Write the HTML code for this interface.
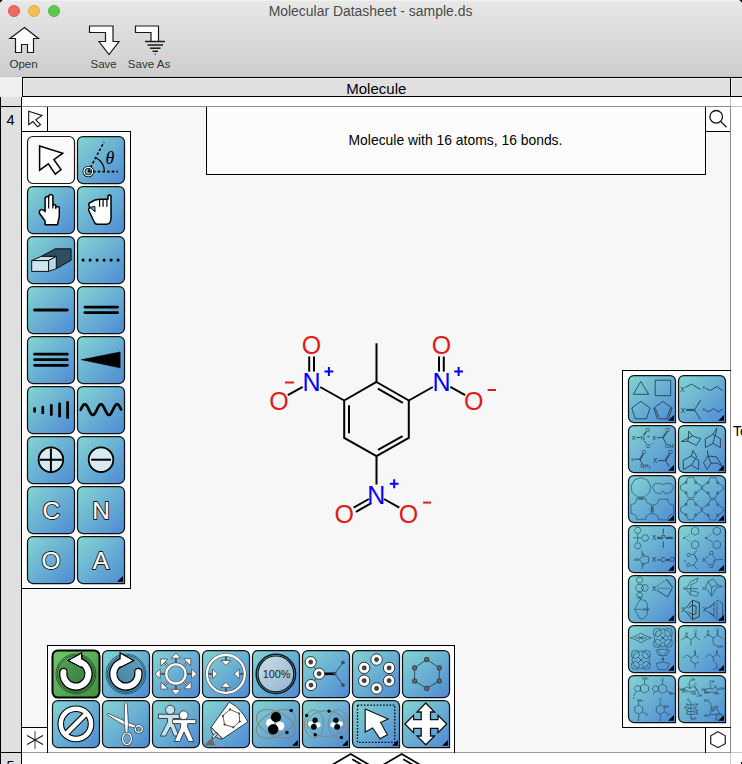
<!DOCTYPE html>
<html><head><meta charset="utf-8"><style>html,body{margin:0;padding:0;width:742px;height:764px;overflow:hidden;background:#fff}svg{display:block}</style></head>
<body><svg width="742" height="764" viewBox="0 0 742 764" font-family="'Liberation Sans', sans-serif"><defs>
<linearGradient id="tb" x1="0" y1="0" x2="0" y2="1"><stop offset="0" stop-color="#e8e8e8"/><stop offset="1" stop-color="#cdcdcd"/></linearGradient>
<linearGradient id="bg" x1="0" y1="0" x2="1" y2="1"><stop offset="0" stop-color="#84d5d2"/><stop offset="1" stop-color="#4e8ad4"/></linearGradient>
<linearGradient id="gg" x1="0" y1="0" x2="1" y2="1"><stop offset="0" stop-color="#73c86c"/><stop offset="1" stop-color="#3f8e3f"/></linearGradient>
</defs>
<rect x="0" y="0" width="742" height="764" fill="#ffffff"/>
<rect x="0" y="0" width="742" height="77" fill="url(#tb)"/>
<rect x="0" y="76" width="743" height="1" fill="#c3c3c3"/>
<rect x="0" y="0" width="743" height="1" fill="#f0f0f0"/>
<path d="M0 0 H3 Q0.8 0.8 0 3 Z" fill="#000"/><path d="M742 0 H739 Q741.2 0.8 742 3 Z" fill="#000"/>
<circle cx="14" cy="11" r="5.6" fill="#ec6a5e" stroke="#d35548" stroke-width="0.8"/>
<circle cx="34" cy="11" r="5.6" fill="#f4bf4f" stroke="#d9a53a" stroke-width="0.8"/>
<circle cx="54" cy="11" r="5.6" fill="#61c554" stroke="#4ea843" stroke-width="0.8"/>
<text x="370.5" y="16" font-size="13.95" fill="#4a4a4a" text-anchor="middle" >Molecular Datasheet - sample.ds</text>
<path d="M24.5 27.5 L38.5 38.5 L33.5 38.5 L33.5 52.5 L27.5 52.5 L27.5 44.5 L21.5 44.5 L21.5 52.5 L15.5 52.5 L15.5 38.5 L10 38.5 Z" fill="#fff" stroke="#1a1a1a" stroke-width="1.2" stroke-linejoin="miter"/>
<text x="23.6" y="67.5" font-size="11.6" fill="#333" text-anchor="middle" >Open</text>
<path d="M89.5 26 L113 26 L113 41.5 L119 41.5 L109 54.5 L99 41.5 L105.5 41.5 L105.5 32.5 L89.5 32.5 Z" fill="#fff" stroke="#1a1a1a" stroke-width="1.2" stroke-linejoin="miter"/>
<text x="103.6" y="67.5" font-size="11.5" fill="#333" text-anchor="middle" >Save</text>
<path d="M135.5 26 L158.5 26 L158.5 41.5 L151 41.5 L151 32.5 L135.5 32.5 Z" fill="#fff" stroke="#1a1a1a" stroke-width="1.2" stroke-linejoin="miter"/>
<line x1="145" y1="41.5" x2="165" y2="41.5" stroke="#1a1a1a" stroke-width="1.5"/>
<line x1="147.5" y1="45" x2="163" y2="45" stroke="#1a1a1a" stroke-width="1.5"/>
<line x1="150" y1="48.2" x2="160.5" y2="48.2" stroke="#1a1a1a" stroke-width="1.5"/>
<line x1="152.5" y1="51.3" x2="158" y2="51.3" stroke="#1a1a1a" stroke-width="1.5"/>
<circle cx="155.3" cy="54.2" r="0.7" fill="#333"/>
<text x="149" y="67.5" font-size="11.6" fill="#333" text-anchor="middle" >Save As</text>
<rect x="0" y="77" width="22" height="20" fill="#efefef"/>
<rect x="22" y="77" width="720" height="20" fill="#000"/>
<rect x="23" y="78" width="707" height="18" fill="#f0f0f0"/>
<rect x="24" y="79" width="706" height="17" fill="#e0e0e0"/>
<rect x="731" y="78" width="11" height="18" fill="#f0f0f0"/>
<rect x="732" y="79" width="10" height="17" fill="#e0e0e0"/>
<text x="376.3" y="93.6" font-size="15.0" fill="#000" text-anchor="middle" >Molecule</text>
<rect x="0" y="97" width="22" height="667" fill="#000"/>
<rect x="1" y="97" width="20" height="667" fill="#e0e0e0"/>
<rect x="1" y="106" width="20" height="1" fill="#000"/>
<rect x="1" y="752" width="20" height="1" fill="#000"/>
<text x="10.5" y="125" font-size="14.5" fill="#000" text-anchor="middle" >4</text>
<text x="10.5" y="771" font-size="14.5" fill="#000" text-anchor="middle" >5</text>
<rect x="22" y="97" width="708" height="656" fill="#ffffff"/>
<rect x="731" y="97" width="11" height="667" fill="#ffffff"/>
<rect x="22" y="106" width="708" height="1" fill="#8c8c8c"/>
<rect x="731" y="106" width="12" height="1" fill="#c4c4c4"/>
<rect x="22" y="752" width="708" height="1" fill="#9a9a9a"/>
<rect x="731" y="752" width="12" height="1" fill="#c8c8c8"/>
<rect x="730" y="97" width="1" height="9" fill="#c4c4c4"/>
<rect x="730" y="106" width="1" height="647" fill="#8c8c8c"/>
<rect x="730" y="753" width="1" height="12" fill="#c8c8c8"/>
<rect x="23" y="107" width="707" height="645" fill="#f7f7f7"/>
<rect x="22" y="107" width="25" height="24" fill="#ffffff"/>
<rect x="47" y="107" width="1" height="25" fill="#000"/>
<rect x="22" y="131" width="26" height="1" fill="#000"/>
<path d="M28.7 111.3 L42 115.4 L35.8 119.8 L40.5 124.6 L37.6 126.8 L33 121.6 L28.7 124.7 Z" fill="#fff" stroke="#111" stroke-width="1.1" stroke-linejoin="miter"/>
<rect x="207" y="107" width="498" height="67" fill="#fcfcfc"/>
<rect x="206" y="107" width="1" height="68" fill="#000"/>
<rect x="705" y="107" width="1" height="68" fill="#000"/>
<rect x="206" y="174" width="500" height="1" fill="#000"/>
<text x="455.5" y="145.2" font-size="13.9" fill="#000" text-anchor="middle" >Molecule with 16 atoms, 16 bonds.</text>
<rect x="706" y="107" width="24" height="24" fill="#ffffff"/>
<rect x="705" y="131" width="25" height="1" fill="#000"/>
<circle cx="716.2" cy="116.8" r="6.3" fill="none" stroke="#111" stroke-width="1.3"/><line x1="720.7" y1="121.4" x2="726.5" y2="127.2" stroke="#111" stroke-width="1.3"/>
<rect x="22" y="132" width="108" height="456" fill="#fcfcfc"/>
<rect x="130" y="131" width="1" height="458" fill="#000"/>
<rect x="22" y="131" width="109" height="1" fill="#000"/>
<rect x="22" y="588" width="109" height="1" fill="#000"/>
<rect x="27.5" y="136.5" width="47" height="47" rx="5.4" fill="#fafafa" stroke="#1a1a1a" stroke-width="1.2"/>
<rect x="77.5" y="136.5" width="47" height="47" rx="5.4" fill="url(#bg)" stroke="#121212" stroke-width="1.25"/>
<rect x="27.5" y="186.5" width="47" height="47" rx="5.4" fill="url(#bg)" stroke="#121212" stroke-width="1.25"/>
<rect x="77.5" y="186.5" width="47" height="47" rx="5.4" fill="url(#bg)" stroke="#121212" stroke-width="1.25"/>
<rect x="27.5" y="236.5" width="47" height="47" rx="5.4" fill="url(#bg)" stroke="#121212" stroke-width="1.25"/>
<rect x="77.5" y="236.5" width="47" height="47" rx="5.4" fill="url(#bg)" stroke="#121212" stroke-width="1.25"/>
<rect x="27.5" y="286.5" width="47" height="47" rx="5.4" fill="url(#bg)" stroke="#121212" stroke-width="1.25"/>
<rect x="77.5" y="286.5" width="47" height="47" rx="5.4" fill="url(#bg)" stroke="#121212" stroke-width="1.25"/>
<rect x="27.5" y="336.5" width="47" height="47" rx="5.4" fill="url(#bg)" stroke="#121212" stroke-width="1.25"/>
<rect x="77.5" y="336.5" width="47" height="47" rx="5.4" fill="url(#bg)" stroke="#121212" stroke-width="1.25"/>
<rect x="27.5" y="386.5" width="47" height="47" rx="5.4" fill="url(#bg)" stroke="#121212" stroke-width="1.25"/>
<rect x="77.5" y="386.5" width="47" height="47" rx="5.4" fill="url(#bg)" stroke="#121212" stroke-width="1.25"/>
<rect x="27.5" y="436.5" width="47" height="47" rx="5.4" fill="url(#bg)" stroke="#121212" stroke-width="1.25"/>
<rect x="77.5" y="436.5" width="47" height="47" rx="5.4" fill="url(#bg)" stroke="#121212" stroke-width="1.25"/>
<rect x="27.5" y="486.5" width="47" height="47" rx="5.4" fill="url(#bg)" stroke="#121212" stroke-width="1.25"/>
<rect x="77.5" y="486.5" width="47" height="47" rx="5.4" fill="url(#bg)" stroke="#121212" stroke-width="1.25"/>
<rect x="27.5" y="536.5" width="47" height="47" rx="5.4" fill="url(#bg)" stroke="#121212" stroke-width="1.25"/>
<path d="M82.9 536.5 H119.1 A5.4 5.4 0 0 1 124.5 541.9 V583.5 H82.9 A5.4 5.4 0 0 1 77.5 578.1 V541.9 A5.4 5.4 0 0 1 82.9 536.5 Z" fill="url(#bg)" stroke="#121212" stroke-width="1.25" stroke-linejoin="miter"/>
<g transform="translate(27,136)"><path d="M12.6 10 L35.8 17.2 L26.9 23.6 L34 33.5 L28.3 38.1 L21.3 27.8 L12.6 34.2 Z" fill="#fff" stroke="#000" stroke-width="1.5" stroke-linejoin="miter"/></g>
<g transform="translate(77,136)"><g stroke="#000" stroke-width="1.6" fill="none">
<line x1="11.3" y1="35.6" x2="41" y2="35.6" stroke-dasharray="2.6 2.1"/>
<line x1="11.3" y1="35.6" x2="27" y2="6" stroke-dasharray="2.6 2.1"/>
<path d="M18.3 21.5 A16 16 0 0 1 27.5 35.6" stroke-width="1.1"/>
</g>
<circle cx="11.3" cy="35.6" r="4.3" fill="none" stroke="#000" stroke-width="2.8"/>
<circle cx="11.3" cy="35.6" r="4.3" fill="none" stroke="#fff" stroke-width="1.3"/>
<text x="33" y="27.5" font-family="'Liberation Serif', serif" font-style="italic" font-size="18" fill="#000" text-anchor="middle">&#952;</text></g>
<g transform="translate(27,186)"><path d="M18.1 38.8 L18.1 35 L12.4 27.2 Q11.8 24.2 14.6 23.4 Q16.6 23.4 18.1 25.6 L18.1 12 Q19.9 9.4 21.7 11 L21.7 9.8 Q23.8 7.2 25.9 9.8 L25.9 19.6 Q27.4 17.6 28.8 19.6 L28.8 21.4 Q30.5 19.4 32.3 21.4 L32.3 30.4 L30.4 38.8 Z" fill="#fff" stroke="#000" stroke-width="1.5" stroke-linejoin="round"/><path d="M21.7 11 V22.6 M25.9 19 V22.6 M28.8 20.8 V23" stroke="#000" stroke-width="1.2"/></g>
<g transform="translate(77,186)"><path d="M11.8 18.6 Q11.5 17.6 12.5 17 L18 14 L22.6 13.2 L31 13.2 L31 9.8 Q32.5 8.4 34 9.8 L34 32.5 Q33.6 38.2 29.5 38.2 L20 38.2 Q18.5 38.2 17.5 36.5 L11.8 24.5 Q11.2 22.6 12.6 21.6 Z" fill="#fff" stroke="#000" stroke-width="1.5" stroke-linejoin="round"/><path d="M22.6 13.4 V20.7 M26.1 13.4 V20.7 M29.9 13.4 V20.7" stroke="#000" stroke-width="1.2"/><polygon points="12.8,21.4 17.8,20.4 18.1,25.8" fill="#63b3d4" stroke="#000" stroke-width="1"/></g>
<g transform="translate(27,236)"><g stroke="#111" stroke-width="1" stroke-linejoin="round">
<polygon points="14.2,20.4 28.3,12.8 44.1,12.8 44.1,24.3 29.3,32.7 29.3,20.4" fill="#2d4f5e"/>
<polygon points="4.7,24.6 14.2,20.4 29.3,20.4 21.6,24.6" fill="#c4e0ec"/>
<rect x="4.7" y="24.6" width="16.9" height="10.8" fill="#cfe5ef"/>
<polygon points="21.6,24.6 29.3,20.4 29.3,32.7 21.6,35.4" fill="#b8d7e6"/>
</g></g>
<g transform="translate(77,236)"><circle cx="6.1" cy="24.1" r="1.55" fill="#000"/><circle cx="13.1" cy="24.1" r="1.55" fill="#000"/><circle cx="20.1" cy="24.1" r="1.55" fill="#000"/><circle cx="27.1" cy="24.1" r="1.55" fill="#000"/><circle cx="34.1" cy="24.1" r="1.55" fill="#000"/><circle cx="41.1" cy="24.1" r="1.55" fill="#000"/></g>
<g transform="translate(27,286)"><line x1="7.6" y1="24" x2="40.2" y2="24" stroke="#000" stroke-width="2.9" stroke-linecap="round"/></g>
<g transform="translate(77,286)"><line x1="7.9" y1="21.1" x2="40.6" y2="21.1" stroke="#000" stroke-width="2.7" stroke-linecap="round"/><line x1="7.9" y1="26.6" x2="40.6" y2="26.6" stroke="#000" stroke-width="2.7" stroke-linecap="round"/></g>
<g transform="translate(27,336)"><line x1="7.6" y1="18.2" x2="40.3" y2="18.2" stroke="#000" stroke-width="2.7" stroke-linecap="round"/><line x1="7.6" y1="23.7" x2="40.3" y2="23.7" stroke="#000" stroke-width="2.7" stroke-linecap="round"/><line x1="7.6" y1="29.3" x2="40.3" y2="29.3" stroke="#000" stroke-width="2.7" stroke-linecap="round"/></g>
<g transform="translate(77,336)"><polygon points="4.3,23.7 43.1,16 43.1,31.8" fill="#000" stroke="#000" stroke-width="0.6"/></g>
<g transform="translate(27,386)"><line x1="7.6" y1="22.5" x2="7.6" y2="25.5" stroke="#000" stroke-width="2.7" stroke-linecap="round"/><line x1="15.8" y1="21.0" x2="15.8" y2="27.0" stroke="#000" stroke-width="2.7" stroke-linecap="round"/><line x1="24.3" y1="19.25" x2="24.3" y2="28.75" stroke="#000" stroke-width="2.7" stroke-linecap="round"/><line x1="32.6" y1="17.75" x2="32.6" y2="30.25" stroke="#000" stroke-width="2.7" stroke-linecap="round"/><line x1="40.6" y1="16.25" x2="40.6" y2="31.75" stroke="#000" stroke-width="2.7" stroke-linecap="round"/></g>
<g transform="translate(77,386)"><polyline points="3.70,23.73 4.10,22.89 4.50,22.07 4.90,21.29 5.30,20.56 5.70,19.90 6.10,19.34 6.50,18.88 6.90,18.53 7.30,18.30 7.70,18.20 8.10,18.24 8.50,18.40 8.90,18.69 9.30,19.09 9.70,19.61 10.10,20.22 10.50,20.92 10.90,21.67 11.30,22.48 11.70,23.31 12.10,24.15 12.50,24.98 12.90,25.77 13.30,26.51 13.70,27.18 14.10,27.76 14.50,28.25 14.90,28.62 15.30,28.87 15.70,28.99 16.10,28.98 16.50,28.84 16.90,28.58 17.30,28.19 17.70,27.70 18.10,27.10 18.50,26.42 18.90,25.67 19.30,24.87 19.70,24.05 20.10,23.21 20.50,22.38 20.90,21.58 21.30,20.82 21.70,20.14 22.10,19.54 22.50,19.04 22.90,18.64 23.30,18.37 23.70,18.23 24.10,18.21 24.50,18.32 24.90,18.56 25.30,18.93 25.70,19.40 26.10,19.98 26.50,20.65 26.90,21.38 27.30,22.17 27.70,23.00 28.10,23.84 28.50,24.67 28.90,25.48 29.30,26.24 29.70,26.94 30.10,27.56 30.50,28.08 30.90,28.49 31.30,28.79 31.70,28.96 32.10,29.00 32.50,28.91 32.90,28.69 33.30,28.35 33.70,27.89 34.10,27.33 34.50,26.68 34.90,25.96 35.30,25.18 35.70,24.36 36.10,23.52 36.50,22.69 36.90,21.87 37.30,21.10 37.70,20.39 38.10,19.75 38.50,19.21 38.90,18.78 39.30,18.46 39.70,18.27 40.10,18.20 40.50,18.27 40.90,18.46 41.30,18.78 41.70,19.21 42.10,19.75 42.50,20.39 42.90,21.10 43.30,21.87 43.70,22.69 44.10,23.52" fill="none" stroke="#000" stroke-width="2.7" stroke-linecap="round" stroke-linejoin="round"/></g>
<g transform="translate(27,436)"><circle cx="23.9" cy="23.7" r="12.3" fill="#d9eaf2" stroke="#000" stroke-width="1.8"/><path d="M12.6 23.7 H35.2 M23.9 12.4 V35" stroke="#000" stroke-width="2"/></g>
<g transform="translate(77,436)"><circle cx="24" cy="23.7" r="12.3" fill="#d9eaf2" stroke="#000" stroke-width="1.8"/><path d="M14.2 23.7 H34" stroke="#000" stroke-width="2"/></g>
<g transform="translate(27,486)"><text x="24.3" y="33.4" font-size="24.4" fill="#111" stroke="#111" stroke-width="1.9" text-anchor="middle" stroke-linejoin="round">C</text><text x="24.3" y="33.4" font-size="24.4" fill="#fff" stroke="#fff" stroke-width="0.15" text-anchor="middle" stroke-linejoin="round">C</text></g>
<g transform="translate(77,486)"><text x="24.0" y="33.4" font-size="24.4" fill="#111" stroke="#111" stroke-width="1.9" text-anchor="middle" stroke-linejoin="round">N</text><text x="24.0" y="33.4" font-size="24.4" fill="#fff" stroke="#fff" stroke-width="0.15" text-anchor="middle" stroke-linejoin="round">N</text></g>
<g transform="translate(27,536)"><text x="24.0" y="33.2" font-size="24.4" fill="#111" stroke="#111" stroke-width="1.9" text-anchor="middle" stroke-linejoin="round">O</text><text x="24.0" y="33.2" font-size="24.4" fill="#fff" stroke="#fff" stroke-width="0.15" text-anchor="middle" stroke-linejoin="round">O</text></g>
<g transform="translate(77,536)"><text x="23.9" y="33.0" font-size="24.4" fill="#111" stroke="#111" stroke-width="1.9" text-anchor="middle" stroke-linejoin="round">A</text><text x="23.9" y="33.0" font-size="24.4" fill="#fff" stroke="#fff" stroke-width="0.15" text-anchor="middle" stroke-linejoin="round">A</text></g>
<path d="M122.9 576 L122.9 581.7 L117.1 581.7 Z" fill="#000"/>
<rect x="623" y="371" width="107" height="356" fill="#ffffff"/>
<rect x="622" y="370" width="1" height="358" fill="#000"/>
<rect x="622" y="370" width="109" height="1" fill="#000"/>
<rect x="622" y="727" width="84" height="1" fill="#000"/>
<path d="M633.9 375.5 H670.1 A5.4 5.4 0 0 1 675.5 380.9 V422.5 H633.9 A5.4 5.4 0 0 1 628.5 417.1 V380.9 A5.4 5.4 0 0 1 633.9 375.5 Z" fill="url(#bg)" stroke="#121212" stroke-width="1.25" stroke-linejoin="miter"/>
<path d="M683.9 375.5 H720.1 A5.4 5.4 0 0 1 725.5 380.9 V422.5 H683.9 A5.4 5.4 0 0 1 678.5 417.1 V380.9 A5.4 5.4 0 0 1 683.9 375.5 Z" fill="url(#bg)" stroke="#121212" stroke-width="1.25" stroke-linejoin="miter"/>
<path d="M633.9 425.5 H670.1 A5.4 5.4 0 0 1 675.5 430.9 V472.5 H633.9 A5.4 5.4 0 0 1 628.5 467.1 V430.9 A5.4 5.4 0 0 1 633.9 425.5 Z" fill="url(#bg)" stroke="#121212" stroke-width="1.25" stroke-linejoin="miter"/>
<path d="M683.9 425.5 H720.1 A5.4 5.4 0 0 1 725.5 430.9 V472.5 H683.9 A5.4 5.4 0 0 1 678.5 467.1 V430.9 A5.4 5.4 0 0 1 683.9 425.5 Z" fill="url(#bg)" stroke="#121212" stroke-width="1.25" stroke-linejoin="miter"/>
<path d="M633.9 475.5 H670.1 A5.4 5.4 0 0 1 675.5 480.9 V522.5 H633.9 A5.4 5.4 0 0 1 628.5 517.1 V480.9 A5.4 5.4 0 0 1 633.9 475.5 Z" fill="url(#bg)" stroke="#121212" stroke-width="1.25" stroke-linejoin="miter"/>
<path d="M683.9 475.5 H720.1 A5.4 5.4 0 0 1 725.5 480.9 V522.5 H683.9 A5.4 5.4 0 0 1 678.5 517.1 V480.9 A5.4 5.4 0 0 1 683.9 475.5 Z" fill="url(#bg)" stroke="#121212" stroke-width="1.25" stroke-linejoin="miter"/>
<path d="M633.9 525.5 H670.1 A5.4 5.4 0 0 1 675.5 530.9 V572.5 H633.9 A5.4 5.4 0 0 1 628.5 567.1 V530.9 A5.4 5.4 0 0 1 633.9 525.5 Z" fill="url(#bg)" stroke="#121212" stroke-width="1.25" stroke-linejoin="miter"/>
<path d="M683.9 525.5 H720.1 A5.4 5.4 0 0 1 725.5 530.9 V572.5 H683.9 A5.4 5.4 0 0 1 678.5 567.1 V530.9 A5.4 5.4 0 0 1 683.9 525.5 Z" fill="url(#bg)" stroke="#121212" stroke-width="1.25" stroke-linejoin="miter"/>
<path d="M633.9 575.5 H670.1 A5.4 5.4 0 0 1 675.5 580.9 V622.5 H633.9 A5.4 5.4 0 0 1 628.5 617.1 V580.9 A5.4 5.4 0 0 1 633.9 575.5 Z" fill="url(#bg)" stroke="#121212" stroke-width="1.25" stroke-linejoin="miter"/>
<path d="M683.9 575.5 H720.1 A5.4 5.4 0 0 1 725.5 580.9 V622.5 H683.9 A5.4 5.4 0 0 1 678.5 617.1 V580.9 A5.4 5.4 0 0 1 683.9 575.5 Z" fill="url(#bg)" stroke="#121212" stroke-width="1.25" stroke-linejoin="miter"/>
<path d="M633.9 625.5 H670.1 A5.4 5.4 0 0 1 675.5 630.9 V672.5 H633.9 A5.4 5.4 0 0 1 628.5 667.1 V630.9 A5.4 5.4 0 0 1 633.9 625.5 Z" fill="url(#bg)" stroke="#121212" stroke-width="1.25" stroke-linejoin="miter"/>
<path d="M683.9 625.5 H720.1 A5.4 5.4 0 0 1 725.5 630.9 V672.5 H683.9 A5.4 5.4 0 0 1 678.5 667.1 V630.9 A5.4 5.4 0 0 1 683.9 625.5 Z" fill="url(#bg)" stroke="#121212" stroke-width="1.25" stroke-linejoin="miter"/>
<path d="M633.9 675.5 H670.1 A5.4 5.4 0 0 1 675.5 680.9 V722.5 H633.9 A5.4 5.4 0 0 1 628.5 717.1 V680.9 A5.4 5.4 0 0 1 633.9 675.5 Z" fill="url(#bg)" stroke="#121212" stroke-width="1.25" stroke-linejoin="miter"/>
<path d="M683.9 675.5 H720.1 A5.4 5.4 0 0 1 725.5 680.9 V722.5 H683.9 A5.4 5.4 0 0 1 678.5 717.1 V680.9 A5.4 5.4 0 0 1 683.9 675.5 Z" fill="url(#bg)" stroke="#121212" stroke-width="1.25" stroke-linejoin="miter"/>
<g transform="translate(628,375)"><polygon points="12.9,6.5 5.2,19.3 20.7,19.3" fill="none" stroke="#1f3440" stroke-width="0.8" stroke-linejoin="round" /><rect x="27.2" y="5.2" width="15.5" height="15.5" fill="none" stroke="#1f3440" stroke-width="0.8" stroke-linejoin="round"/><polygon points="12.9,26.4 22.0,33.0 18.5,43.8 7.3,43.8 3.8,33.0" fill="none" stroke="#1f3440" stroke-width="0.8" stroke-linejoin="round" /><polygon points="34.9,26.4 44.0,33.0 40.5,43.8 29.3,43.8 25.8,33.0" fill="none" stroke="#1f3440" stroke-width="0.8" stroke-linejoin="round" /><polyline points="30.9,42.3 27.2,33.2" fill="none" stroke="#1f3440" stroke-width="0.8" stroke-linejoin="round" /><polyline points="38.9,42.3 42.6,33.2" fill="none" stroke="#1f3440" stroke-width="0.8" stroke-linejoin="round" /></g>
<g transform="translate(678,375)"><text x="4.5" y="17" font-size="6.5" fill="#1f3440" text-anchor="middle">X</text><polyline points="7.4,12.3 13.6,9.1 22.6,14.6" fill="none" stroke="#1f3440" stroke-width="0.8" stroke-linejoin="round" /><text x="25.9" y="14" font-size="4.5" fill="#1f3440" text-anchor="middle">x</text><polyline points="27.8,13.3 32.3,15.5 38.8,11.6 44.6,15.5" fill="none" stroke="#1f3440" stroke-width="0.8" stroke-linejoin="round" /><text x="5.2" y="38" font-size="7" fill="#1f3440" text-anchor="middle">X</text><polyline points="8.1,34.3 16.5,34.3" fill="none" stroke="#1f3440" stroke-width="0.8" stroke-linejoin="round" /><polyline points="8.1,35.5 16.5,35.5" fill="none" stroke="#1f3440" stroke-width="0.8" stroke-linejoin="round" /><polyline points="22.6,25.2 16.5,34.9 22.6,44.6" fill="none" stroke="#1f3440" stroke-width="0.8" stroke-linejoin="round" /><text x="25.5" y="36" font-size="4.5" fill="#1f3440" text-anchor="middle">x</text><polyline points="27.2,34.9 30.4,36.9 35.6,33.6 40.4,36.9 44.6,34.0" fill="none" stroke="#1f3440" stroke-width="0.8" stroke-linejoin="round" /></g>
<g transform="translate(628,425)"><text x="5.8" y="14.6" font-size="5.8" fill="#1f3440" text-anchor="middle">X</text><polyline points="8.4,12.6 12.6,12.6" fill="none" stroke="#1f3440" stroke-width="0.8" stroke-linejoin="round" /><text x="14.9" y="14.9" font-size="5.8" fill="#1f3440" text-anchor="middle">N</text><text x="20.4" y="13.2" font-size="4.5" fill="#1f3440" text-anchor="middle">+</text><text x="19.7" y="6.9" font-size="5.8" fill="#1f3440" text-anchor="middle">O</text><polyline points="15.1,10.1 17.7,6.9" fill="none" stroke="#1f3440" stroke-width="0.8" stroke-linejoin="round" /><polyline points="15.9,10.5 18.5,7.3" fill="none" stroke="#1f3440" stroke-width="0.8" stroke-linejoin="round" /><text x="20" y="22.7" font-size="5.8" fill="#1f3440" text-anchor="middle">O</text><polyline points="15.8,15.5 18.4,18.4" fill="none" stroke="#1f3440" stroke-width="0.8" stroke-linejoin="round" /><text x="24.9" y="20" font-size="4.5" fill="#1f3440" text-anchor="middle">&#8722;</text><text x="26.2" y="14.9" font-size="5.8" fill="#1f3440" text-anchor="middle">X</text><polyline points="28.8,12.6 34.9,12.6" fill="none" stroke="#1f3440" stroke-width="0.8" stroke-linejoin="round" /><polyline points="34.5,12.3 38.4,6.8" fill="none" stroke="#1f3440" stroke-width="0.8" stroke-linejoin="round" /><polyline points="35.3,12.9 39.2,7.4" fill="none" stroke="#1f3440" stroke-width="0.8" stroke-linejoin="round" /><text x="39.5" y="7.2" font-size="5.8" fill="#1f3440" text-anchor="middle">O</text><polyline points="34.9,12.6 38.2,18.8" fill="none" stroke="#1f3440" stroke-width="0.8" stroke-linejoin="round" /><text x="41.4" y="22.7" font-size="5.8" fill="#1f3440" text-anchor="middle">OH</text><text x="4.5" y="35.6" font-size="5" fill="#1f3440" text-anchor="middle">x</text><polyline points="6.5,34.3 12.0,34.3" fill="none" stroke="#1f3440" stroke-width="0.8" stroke-linejoin="round" /><polyline points="11.6,34.0 14.8,28.8" fill="none" stroke="#1f3440" stroke-width="0.8" stroke-linejoin="round" /><polyline points="12.4,34.6 15.6,29.4" fill="none" stroke="#1f3440" stroke-width="0.8" stroke-linejoin="round" /><text x="15.8" y="29.2" font-size="5.5" fill="#1f3440" text-anchor="middle">O</text><polyline points="12.0,34.3 14.6,39.5" fill="none" stroke="#1f3440" stroke-width="0.8" stroke-linejoin="round" /><text x="17.5" y="43.4" font-size="5.5" fill="#1f3440" text-anchor="middle">NH&#8322;</text><text x="27.2" y="37.8" font-size="6.5" fill="#1f3440" text-anchor="middle">X</text><polyline points="30.1,35.6 37.5,35.6" fill="none" stroke="#1f3440" stroke-width="0.8" stroke-linejoin="round" /><polyline points="37.1,35.3 41.0,28.8" fill="none" stroke="#1f3440" stroke-width="0.8" stroke-linejoin="round" /><polyline points="37.9,35.9 41.8,29.4" fill="none" stroke="#1f3440" stroke-width="0.8" stroke-linejoin="round" /><text x="42.4" y="28.8" font-size="6" fill="#1f3440" text-anchor="middle">O</text><polyline points="37.5,35.6 41.4,42.0" fill="none" stroke="#1f3440" stroke-width="0.8" stroke-linejoin="round" /></g>
<g transform="translate(678,425)"><path d="M10.7 6.1 L14.6 11.0 M10.7 6.1 L10.3 13.6 M14.6 11.0 L22.6 13.6 M22.6 13.6 L18.4 20.4 M18.4 20.4 L9.7 16.2 M9.7 16.2 L3.2 16.5 M3.2 16.5 L14.6 11.0 M10.3 13.6 L9.7 16.2" fill="none" stroke="#1f3440" stroke-width="0.8" stroke-linejoin="round" /><path d="M38.8 3.2 L34.9 9.4 M38.8 3.2 L37.5 10.3 M34.9 9.4 L27.2 13.9 M27.2 13.9 L27.5 22.6 M27.5 22.6 L34.9 18.4 M34.9 18.4 L42.4 22.6 M42.4 22.6 L42.4 13.6 M42.4 13.6 L34.9 9.4 M34.9 18.4 L36.9 10.3" fill="none" stroke="#1f3440" stroke-width="0.8" stroke-linejoin="round" /><path d="M14.9 25.5 L13.3 31.0 M14.9 25.5 L18.8 31.7 M13.3 31.0 L5.2 35.3 M5.2 35.3 L5.5 44.6 M5.5 44.6 L13.3 40.1 M13.3 40.1 L20.7 44.6 M20.7 44.6 L20.7 35.3 M20.7 35.3 L13.3 31.0 M13.3 40.1 L18.8 31.7" fill="none" stroke="#1f3440" stroke-width="0.8" stroke-linejoin="round" /><path d="M29.4 25.2 L30.1 31.0 M30.1 31.0 L25.5 37.8 M25.5 37.8 L29.1 44.6 M29.1 44.6 L33.0 38.2 M33.0 38.2 L30.1 31.0 M30.1 31.0 L38.8 32.0 M38.8 32.0 L44.0 41.4 M33.0 38.2 L39.5 38.2 M39.5 38.2 L44.0 41.4" fill="none" stroke="#1f3440" stroke-width="0.8" stroke-linejoin="round" /></g>
<g transform="translate(628,475)"><polygon points="12.9,2.6 19.3,4.9 22.7,10.9 21.6,17.6 16.3,22.0 9.5,22.0 4.2,17.6 3.1,10.9 6.5,4.9" fill="none" stroke="#2c5468" stroke-width="0.9" stroke-opacity="0.8" stroke-linejoin="round"/><polygon points="24.3,12.3 27.2,8.4 32.3,8.4 35,10 37.5,8.4 42.7,8.4 45.6,12.3 42.7,17.5 37.5,18.8 35,15.8 32.3,18.8 27.2,17.5" fill="none" stroke="#2c5468" stroke-width="0.9" stroke-opacity="0.8" stroke-linejoin="round"/><path d="M8.700000000000001 23.7 H17.9 Q17.9 29.4 23.6 29.4 V38.6 Q17.9 38.6 17.9 44.3 H8.700000000000001 Q8.700000000000001 38.6 3.0 38.6 V29.4 Q8.700000000000001 29.4 8.700000000000001 23.7 Z" fill="none" stroke="#2c5468" stroke-width="0.9" stroke-opacity="0.8" stroke-linejoin="round"/><path d="M30.699999999999996 24.3 H39.9 Q39.9 30.0 45.599999999999994 30.0 V39.2 Q39.9 39.2 39.9 44.900000000000006 H30.699999999999996 Q30.699999999999996 39.2 24.999999999999996 39.2 V30.0 Q30.699999999999996 30.0 30.699999999999996 24.3 Z" fill="none" stroke="#2c5468" stroke-width="0.9" stroke-opacity="0.8" stroke-linejoin="round"/><path d="M10.5 23 H15.5 M10.5 24.2 H15.5 M23.4 32 V37 M24.6 32 V37" fill="none" stroke="#2c5468" stroke-width="0.9" stroke-opacity="0.8" stroke-linejoin="round"/></g>
<g transform="translate(678,475)"><polygon points="10.3,2.4 15.5,2.4 17.7,7.4 23.3,10.8 23.3,14.4 17.7,17.8 15.5,22.8 10.3,22.8 8.1,17.8 2.5,14.4 2.5,10.8 8.1,7.4" fill="none" stroke="#2c5468" stroke-width="0.9" stroke-opacity="0.8" stroke-linejoin="round"/><circle cx="8.1" cy="7.4" r="1.1" fill="none" stroke="#2c5468" stroke-width="0.9" stroke-opacity="0.8" stroke-linejoin="round"/><circle cx="17.7" cy="7.4" r="1.1" fill="none" stroke="#2c5468" stroke-width="0.9" stroke-opacity="0.8" stroke-linejoin="round"/><circle cx="8.1" cy="17.8" r="1.1" fill="none" stroke="#2c5468" stroke-width="0.9" stroke-opacity="0.8" stroke-linejoin="round"/><circle cx="17.7" cy="17.8" r="1.1" fill="none" stroke="#2c5468" stroke-width="0.9" stroke-opacity="0.8" stroke-linejoin="round"/><polygon points="32.3,2.7 37.5,2.7 39.7,7.7 45.3,11.1 45.3,14.7 39.7,18.1 37.5,23.1 32.3,23.1 30.1,18.1 24.5,14.7 24.5,11.1 30.1,7.7" fill="none" stroke="#2c5468" stroke-width="0.9" stroke-opacity="0.8" stroke-linejoin="round"/><circle cx="30.1" cy="7.7" r="1.1" fill="none" stroke="#2c5468" stroke-width="0.9" stroke-opacity="0.8" stroke-linejoin="round"/><circle cx="39.7" cy="7.7" r="1.1" fill="none" stroke="#2c5468" stroke-width="0.9" stroke-opacity="0.8" stroke-linejoin="round"/><circle cx="30.1" cy="18.1" r="1.1" fill="none" stroke="#2c5468" stroke-width="0.9" stroke-opacity="0.8" stroke-linejoin="round"/><circle cx="39.7" cy="18.1" r="1.1" fill="none" stroke="#2c5468" stroke-width="0.9" stroke-opacity="0.8" stroke-linejoin="round"/><polygon points="10.3,24.4 15.5,24.4 17.7,29.4 23.3,32.8 23.3,36.4 17.7,39.8 15.5,44.8 10.3,44.8 8.1,39.8 2.5,36.4 2.5,32.8 8.1,29.4" fill="none" stroke="#2c5468" stroke-width="0.9" stroke-opacity="0.8" stroke-linejoin="round"/><circle cx="8.1" cy="29.4" r="1.1" fill="none" stroke="#2c5468" stroke-width="0.9" stroke-opacity="0.8" stroke-linejoin="round"/><circle cx="17.7" cy="29.4" r="1.1" fill="none" stroke="#2c5468" stroke-width="0.9" stroke-opacity="0.8" stroke-linejoin="round"/><circle cx="8.1" cy="39.8" r="1.1" fill="none" stroke="#2c5468" stroke-width="0.9" stroke-opacity="0.8" stroke-linejoin="round"/><circle cx="17.7" cy="39.8" r="1.1" fill="none" stroke="#2c5468" stroke-width="0.9" stroke-opacity="0.8" stroke-linejoin="round"/><polygon points="32.3,24.7 37.5,24.7 39.7,29.7 45.3,33.1 45.3,36.7 39.7,40.1 37.5,45.1 32.3,45.1 30.1,40.1 24.5,36.7 24.5,33.1 30.1,29.7" fill="none" stroke="#2c5468" stroke-width="0.9" stroke-opacity="0.8" stroke-linejoin="round"/><circle cx="30.1" cy="29.7" r="1.1" fill="none" stroke="#2c5468" stroke-width="0.9" stroke-opacity="0.8" stroke-linejoin="round"/><circle cx="39.7" cy="29.7" r="1.1" fill="none" stroke="#2c5468" stroke-width="0.9" stroke-opacity="0.8" stroke-linejoin="round"/><circle cx="30.1" cy="40.1" r="1.1" fill="none" stroke="#2c5468" stroke-width="0.9" stroke-opacity="0.8" stroke-linejoin="round"/><circle cx="39.7" cy="40.1" r="1.1" fill="none" stroke="#2c5468" stroke-width="0.9" stroke-opacity="0.8" stroke-linejoin="round"/></g>
<g transform="translate(628,525)"><polygon points="13.1,5.3 11.4,8.2 8.0,8.2 6.3,5.3 8.0,2.4 11.4,2.4" fill="none" stroke="#2c5468" stroke-width="0.9" stroke-opacity="0.8" stroke-linejoin="round"/><polygon points="20.8,12.9 19.0,16.0 15.4,16.0 13.6,12.9 15.4,9.8 19.0,9.8" fill="none" stroke="#2c5468" stroke-width="0.9" stroke-opacity="0.8" stroke-linejoin="round"/><polygon points="13.1,20.8 11.4,23.7 8.0,23.7 6.3,20.8 8.0,17.9 11.4,17.9" fill="none" stroke="#2c5468" stroke-width="0.9" stroke-opacity="0.8" stroke-linejoin="round"/><path d="M5.5 12.9 H13.6 M9.7 8.7 V17" fill="none" stroke="#2c5468" stroke-width="0.9" stroke-opacity="0.8" stroke-linejoin="round"/><text x="26.2" y="15.2" font-size="6.5" fill="#1f3440" text-anchor="middle">X</text><polyline points="29.1,12.3 33.4,12.3" fill="none" stroke="#1f3440" stroke-width="0.8" stroke-linejoin="round" /><polyline points="29.1,13.5 33.4,13.5" fill="none" stroke="#1f3440" stroke-width="0.8" stroke-linejoin="round" /><text x="35.3" y="15.2" font-size="6.5" fill="#1f3440" text-anchor="middle">P</text><polyline points="35.3,3.6 35.3,9.2" fill="none" stroke="#1f3440" stroke-width="0.8" stroke-linejoin="round" /><polyline points="35.3,16.6 35.3,22.6" fill="none" stroke="#1f3440" stroke-width="0.8" stroke-linejoin="round" /><polyline points="37.8,12.3 44.8,12.3" fill="none" stroke="#1f3440" stroke-width="0.8" stroke-linejoin="round" /><polyline points="37.8,13.5 44.8,13.5" fill="none" stroke="#1f3440" stroke-width="0.8" stroke-linejoin="round" /><path d="M11.3 34.6 L14.9 30.8 L20.7 31.8 V37.4 L14.9 38.8 Z M6.1 34 H11.3 M6.1 35.2 H11.3 M14.6 29 L13.6 25.5 M14.6 40.3 L13.6 44.6" fill="none" stroke="#2c5468" stroke-width="0.9" stroke-opacity="0.8" stroke-linejoin="round"/><text x="14.9" y="31" font-size="3.8" fill="#1f3440" text-anchor="middle">N</text><text x="14.9" y="41" font-size="3.8" fill="#1f3440" text-anchor="middle">N</text><text x="26.2" y="37.2" font-size="6.5" fill="#1f3440" text-anchor="middle">X</text><polyline points="29.1,35.0 32.4,35.0" fill="none" stroke="#1f3440" stroke-width="0.8" stroke-linejoin="round" /><text x="34.9" y="37.2" font-size="6.5" fill="#1f3440" text-anchor="middle">C</text><polyline points="37.5,34.4 41.5,34.4" fill="none" stroke="#1f3440" stroke-width="0.8" stroke-linejoin="round" /><polyline points="37.5,35.6 41.5,35.6" fill="none" stroke="#1f3440" stroke-width="0.8" stroke-linejoin="round" /><text x="44" y="37.2" font-size="6.5" fill="#1f3440" text-anchor="middle">O</text></g>
<g transform="translate(678,525)"><polygon points="20.7,8.2 17.1,10.3 13.5,8.2 13.5,4.0 17.1,1.9 20.7,4.0" fill="none" stroke="#2c5468" stroke-width="0.9" stroke-opacity="0.8" stroke-linejoin="round"/><polygon points="20.7,21.8 17.1,23.9 13.5,21.8 13.5,17.6 17.1,15.5 20.7,17.6" fill="none" stroke="#2c5468" stroke-width="0.9" stroke-opacity="0.8" stroke-linejoin="round"/><path d="M6.1 12.9 L12.9 8.7 M6.1 12.9 L12.9 17.1" fill="none" stroke="#2c5468" stroke-width="0.9" stroke-opacity="0.8" stroke-linejoin="round" stroke-dasharray="1 1"/><circle cx="6.1" cy="12.9" r="0.8" fill="#2c5468"/><polygon points="42.4,8.2 38.8,10.3 35.2,8.2 35.2,4.0 38.8,1.9 42.4,4.0" fill="none" stroke="#2c5468" stroke-width="0.9" stroke-opacity="0.8" stroke-linejoin="round"/><polygon points="42.4,21.8 38.8,23.9 35.2,21.8 35.2,17.6 38.8,15.5 42.4,17.6" fill="none" stroke="#2c5468" stroke-width="0.9" stroke-opacity="0.8" stroke-linejoin="round"/><path d="M27.8 12.9 L34.6 8.7" fill="none" stroke="#2c5468" stroke-width="0.9" stroke-opacity="0.8" stroke-linejoin="round" stroke-dasharray="1 1"/><path d="M27.8 12.9 L34.6 17.1" fill="none" stroke="#2c5468" stroke-width="0.9" stroke-opacity="0.8" stroke-linejoin="round"/><circle cx="27.8" cy="12.9" r="0.8" fill="#2c5468"/><text x="10.7" y="31.6" font-size="5" fill="#1f3440" text-anchor="middle">O</text><text x="10.3" y="41.9" font-size="5" fill="#1f3440" text-anchor="middle">O</text><text x="7.1" y="36.5" font-size="4" fill="#1f3440" text-anchor="middle">x</text><path d="M12.6 29.6 L15.9 29.4 L18.8 25.2 M15.9 29.4 L19.1 34.9 L15.9 40.1 L19.1 44.6 M12.6 40.3 L15.9 40.1 M16.4 29.9 L19.6 34.9" fill="none" stroke="#2c5468" stroke-width="0.9" stroke-opacity="0.8" stroke-linejoin="round"/><text x="25.9" y="37" font-size="6" fill="#1f3440" text-anchor="middle">X</text><text x="33.3" y="30" font-size="5.5" fill="#1f3440" text-anchor="middle">O</text><text x="33.3" y="43.3" font-size="5.5" fill="#1f3440" text-anchor="middle">O</text><path d="M27.8 33.2 L31.6 29.6 M27.8 36.6 L31.6 40.1 M34.8 29.6 L37.5 34.9 L34.8 40.1 M36.4 34.9 L35.2 37.4 M37.5 34.9 L45 34.3" fill="none" stroke="#2c5468" stroke-width="0.9" stroke-opacity="0.8" stroke-linejoin="round"/></g>
<g transform="translate(628,575)"><polygon points="15.0,4.9 13.3,7.8 9.9,7.8 8.2,4.9 9.9,2.0 13.3,2.0" fill="none" stroke="#2c5468" stroke-width="0.9" stroke-opacity="0.8" stroke-linejoin="round"/><polygon points="15.8,12.9 13.7,16.5 9.5,16.5 7.4,12.9 9.5,9.3 13.7,9.3" fill="none" stroke="#2c5468" stroke-width="0.9" stroke-opacity="0.8" stroke-linejoin="round"/><polygon points="20.4,12.9 18.6,16.0 15.0,16.0 13.2,12.9 15.0,9.8 18.6,9.8" fill="none" stroke="#2c5468" stroke-width="0.9" stroke-opacity="0.8" stroke-linejoin="round"/><polygon points="14.8,20.4 13.2,23.2 10.0,23.2 8.4,20.4 10.0,17.6 13.2,17.6" fill="none" stroke="#2c5468" stroke-width="0.9" stroke-opacity="0.8" stroke-linejoin="round"/><path d="M12 24.6 L17.5 25.5 L19.4 29.8 V38.8 L16.2 43.3 L12 44 L6.5 34.3 Z M6.5 34.3 H16.5" fill="none" stroke="#2c5468" stroke-width="0.9" stroke-opacity="0.8" stroke-linejoin="round"/><text x="12" y="24.4" font-size="4" fill="#1f3440" text-anchor="middle">N</text><text x="18.4" y="36" font-size="4" fill="#1f3440" text-anchor="middle">NH</text><text x="26.2" y="15.5" font-size="7" fill="#1f3440" text-anchor="middle">X</text><path d="M28.5 11.5 L38.8 4.5 M29.5 13.3 H42" fill="none" stroke="#1f3440" stroke-width="0.8" stroke-linejoin="round" stroke-dasharray="1 1"/><path d="M28.5 15 L39.5 22 L44.6 12.3" fill="none" stroke="#1f3440" stroke-width="0.8" stroke-linejoin="round"/><path d="M38.8 4.5 L44.6 12.3" fill="none" stroke="#1f3440" stroke-width="1.6" stroke-dasharray="0.6 0.6"/></g>
<g transform="translate(678,575)"><text x="6.1" y="15.2" font-size="4.5" fill="#1f3440" text-anchor="middle">x</text><path d="M7.6 13.6 L12.9 6.5 L20 3 L18.8 7.1 L12.9 9.7 L12.5 20 L18.8 21.3 L20.7 17.5 L12.5 15.5 M7.6 13.6 L12.5 20 M7.6 13.6 L20 13.6" fill="none" stroke="#2c5468" stroke-width="0.9" stroke-opacity="0.8" stroke-linejoin="round"/><text x="25.5" y="15.2" font-size="4.5" fill="#1f3440" text-anchor="middle">x</text><path d="M27 13.6 L30 6.5 L35.3 3.9 L39.5 9.7 L44.6 11.6 L38.8 12.3 L33.6 21.3 L30 15.5 Z M30 6.5 L33.6 12.3 L39.5 9.7 M33.6 12.3 V21.3" fill="none" stroke="#2c5468" stroke-width="0.9" stroke-opacity="0.8" stroke-linejoin="round"/><text x="5.5" y="37.2" font-size="6.5" fill="#1f3440" text-anchor="middle">X</text><path d="M7.5 33.6 L14.5 25.2 L21.3 27.8 V41.4 L14.5 44.6 L7.5 36 M10.5 33 L14.5 30 L18 31 V38.5 L14.5 40 L10.5 37 M14.5 25.2 V44.6" fill="none" stroke="#1f3440" stroke-width="0.9" stroke-linejoin="round"/><text x="26.8" y="37.2" font-size="6.5" fill="#1f3440" text-anchor="middle">X</text><path d="M29 33.6 L40 25.2 L44.6 28.5 V42 L40 44.6 L29 36 M31.5 33 L36 28.5 V41 L31.5 37 M39 28 V42" fill="none" stroke="#1f3440" stroke-width="0.9" stroke-linejoin="round" stroke-dasharray="1.2 0.6"/></g>
<g transform="translate(628,625)"><path d="M2.6 12.9 L7 11.2 L10.5 9.5 L12.9 8.1 L15.3 9.5 L18.8 11.2 L23.3 12.9 L18.8 14.6 L15.3 16.3 L12.9 17.8 L10.5 16.3 L7 14.6 Z M7 12.9 H18.8 M10.5 11 L15.3 14.8 M15.3 11 L10.5 14.8" fill="none" stroke="#2c5468" stroke-width="0.9" stroke-opacity="0.8" stroke-linejoin="round"/><polygon points="43.6,21.6 38.3,22.4 35.9,17.7 39.7,13.9 44.4,16.3" fill="none" stroke="#2c5468" stroke-width="0.9" stroke-opacity="0.8" stroke-linejoin="round"/><polygon points="26.2,21.6 25.4,16.3 30.1,13.9 33.9,17.7 31.5,22.4" fill="none" stroke="#2c5468" stroke-width="0.9" stroke-opacity="0.8" stroke-linejoin="round"/><polygon points="26.2,4.2 31.5,3.4 33.9,8.1 30.1,11.9 25.4,9.5" fill="none" stroke="#2c5468" stroke-width="0.9" stroke-opacity="0.8" stroke-linejoin="round"/><polygon points="43.6,4.2 44.4,9.5 39.7,11.9 35.9,8.1 38.3,3.4" fill="none" stroke="#2c5468" stroke-width="0.9" stroke-opacity="0.8" stroke-linejoin="round"/><polygon points="43.9,12.9 41.3,19.3 34.9,21.9 28.5,19.3 25.9,12.9 28.5,6.5 34.9,3.9 41.3,6.5" fill="none" stroke="#2c5468" stroke-width="0.9" stroke-opacity="0.8" stroke-linejoin="round"/><path d="M31.9 9.9 L37.9 15.9 M37.9 9.9 L31.9 15.9" fill="none" stroke="#2c5468" stroke-width="0.9" stroke-opacity="0.8" stroke-linejoin="round"/><circle cx="34.9" cy="12.9" r="0.8" fill="#2c5468"/><polygon points="21.6,43.6 16.3,44.4 13.9,39.7 17.7,35.9 22.4,38.3" fill="none" stroke="#2c5468" stroke-width="0.9" stroke-opacity="0.8" stroke-linejoin="round"/><polygon points="4.2,43.6 3.4,38.3 8.1,35.9 11.9,39.7 9.5,44.4" fill="none" stroke="#2c5468" stroke-width="0.9" stroke-opacity="0.8" stroke-linejoin="round"/><polygon points="4.2,26.2 9.5,25.4 11.9,30.1 8.1,33.9 3.4,31.5" fill="none" stroke="#2c5468" stroke-width="0.9" stroke-opacity="0.8" stroke-linejoin="round"/><polygon points="21.6,26.2 22.4,31.5 17.7,33.9 13.9,30.1 16.3,25.4" fill="none" stroke="#2c5468" stroke-width="0.9" stroke-opacity="0.8" stroke-linejoin="round"/><polygon points="21.9,34.9 19.3,41.3 12.9,43.9 6.5,41.3 3.9,34.9 6.5,28.5 12.9,25.9 19.3,28.5" fill="none" stroke="#2c5468" stroke-width="0.9" stroke-opacity="0.8" stroke-linejoin="round"/><path d="M9.9 31.9 L15.9 37.9 M15.9 31.9 L9.9 37.9" fill="none" stroke="#2c5468" stroke-width="0.9" stroke-opacity="0.8" stroke-linejoin="round"/><circle cx="12.9" cy="34.9" r="0.8" fill="#2c5468"/><path d="M28.1 25.5 L30 24.3 H39.5 L41.4 25.5 L39 30.4 H30.5 Z M30 24.3 L33 30.4 M39.5 24.3 L36.5 30.4 M28.1 38.5 L34.9 37 L41.4 38.5 L39 44.6 H30.5 Z M34.9 30.4 V37 M33.6 33.5 H36.2 M33.6 34.6 H36.2" fill="none" stroke="#2c5468" stroke-width="0.9" stroke-opacity="0.8" stroke-linejoin="round"/></g>
<g transform="translate(678,625)"><path d="M3.6 14.9 L8.4 11.6 L12.9 14.6 L17.5 11.9 L22 14.9 M12.9 14.6 V20.7 M17.1 11.9 V7.5 M17.9 11.9 V7.5 M25.9 13.3 L30 9.7 L35 12.9 L39.5 10.3 L44.6 13.3 M35 12.9 V18.8 L39.5 21.3 M39.1 10.3 V5.8 M39.9 10.3 V5.8" fill="none" stroke="#2c5468" stroke-width="0.9" stroke-opacity="0.8" stroke-linejoin="round"/><text x="8.4" y="9.6" font-size="3.5" fill="#1f3440" text-anchor="middle">H</text><text x="8.4" y="13.2" font-size="3.5" fill="#1f3440" text-anchor="middle">N</text><text x="17.5" y="7.2" font-size="3.8" fill="#1f3440" text-anchor="middle">O</text><text x="30" y="7.8" font-size="3.5" fill="#1f3440" text-anchor="middle">H</text><text x="30" y="11.4" font-size="3.5" fill="#1f3440" text-anchor="middle">N</text><text x="39.5" y="5.6" font-size="3.8" fill="#1f3440" text-anchor="middle">O</text><text x="42" y="23" font-size="3.8" fill="#1f3440" text-anchor="middle">SH</text><path d="M4.9 33 L9.1 30 L12.9 32.7 L17.1 29.8 L21 33 M12.9 32.7 V36.2 L17.1 38.8 L21 36.8 M17.1 38.8 V43.5 M16.7 29.8 V25.5 M17.5 29.8 V25.5 M27.5 32 L31.4 29.4 L35.3 32 L38.8 29.4 L42.4 32 M35.3 32 V36.2 L38.8 38.8 V42.7 L35 44.6 M38.8 42.7 L42.4 44.6 M38.4 29.4 V25.5 M39.2 29.4 V25.5" fill="none" stroke="#2c5468" stroke-width="0.9" stroke-opacity="0.8" stroke-linejoin="round"/></g>
<g transform="translate(628,675)"><polygon points="20.5,15.9 16.5,18.2 12.5,15.9 12.5,11.3 16.5,9.0 20.5,11.3" fill="none" stroke="#2c5468" stroke-width="0.9" stroke-opacity="0.8" stroke-linejoin="round"/><polygon points="6.2,13.6 8.5,10.4 12.4,11.6 12.4,15.6 8.5,16.8" fill="none" stroke="#2c5468" stroke-width="0.9" stroke-opacity="0.8" stroke-linejoin="round"/><path d="M16.5 9 V5 M7.5 17 L5.8 21" fill="none" stroke="#2c5468" stroke-width="0.9" stroke-opacity="0.8" stroke-linejoin="round"/><text x="17.5" y="4.6" font-size="3.6" fill="#1f3440" text-anchor="middle">NH&#8322;</text><text x="5.8" y="23.5" font-size="3.6" fill="#1f3440" text-anchor="middle">x</text><polygon points="38.6,16.2 34.6,18.5 30.6,16.2 30.6,11.6 34.6,9.3 38.6,11.6" fill="none" stroke="#2c5468" stroke-width="0.9" stroke-opacity="0.8" stroke-linejoin="round"/><polygon points="24.2,13.9 26.5,10.7 30.4,11.9 30.4,15.9 26.5,17.1" fill="none" stroke="#2c5468" stroke-width="0.9" stroke-opacity="0.8" stroke-linejoin="round"/><path d="M34.6 9.3 V5.5 M38.6 16.2 L43 18 M26 17.5 L25.5 20" fill="none" stroke="#2c5468" stroke-width="0.9" stroke-opacity="0.8" stroke-linejoin="round"/><text x="34.6" y="5.8" font-size="3.8" fill="#1f3440" text-anchor="middle">O</text><text x="44" y="20" font-size="3.4" fill="#1f3440" text-anchor="middle">NH&#8322;</text><polygon points="14.7,36.9 10.7,39.2 6.7,36.9 6.7,32.3 10.7,30.0 14.7,32.3" fill="none" stroke="#2c5468" stroke-width="0.9" stroke-opacity="0.8" stroke-linejoin="round"/><path d="M10.7 30 V26.5 M14.7 36.9 L17.8 38.6 M10.7 39.2 V43.5" fill="none" stroke="#2c5468" stroke-width="0.9" stroke-opacity="0.8" stroke-linejoin="round"/><text x="12.3" y="26.5" font-size="3.6" fill="#1f3440" text-anchor="middle">NH&#8322;</text><text x="18.8" y="40.6" font-size="3.8" fill="#1f3440" text-anchor="middle">O</text><text x="10.3" y="45.5" font-size="3.6" fill="#1f3440" text-anchor="middle">x</text><polygon points="36.3,36.9 32.3,39.2 28.3,36.9 28.3,32.3 32.3,30.0 36.3,32.3" fill="none" stroke="#2c5468" stroke-width="0.9" stroke-opacity="0.8" stroke-linejoin="round"/><path d="M32.3 30 V26.5 M36.3 36.9 L39.4 38.6 M32.3 39.2 V43.5" fill="none" stroke="#2c5468" stroke-width="0.9" stroke-opacity="0.8" stroke-linejoin="round"/><text x="32.3" y="26.3" font-size="3.8" fill="#1f3440" text-anchor="middle">O</text><text x="40.4" y="40.6" font-size="3.8" fill="#1f3440" text-anchor="middle">O</text><text x="38.2" y="33.2" font-size="3.3" fill="#1f3440" text-anchor="middle">NH</text><text x="32.3" y="45.5" font-size="3.6" fill="#1f3440" text-anchor="middle">x</text></g>
<g transform="translate(678,675)"><path d="M4.5 14.2 L9.4 12 L12 13.6 L14.6 11.6 L17.1 12 L18.8 15 L16 16.5 L12.5 17 L9 15.8 Z M12 13.6 L11 7.5 L13.2 5.4 M17.1 12 L19.8 16 L21 19.5" fill="none" stroke="#2c5468" stroke-width="0.9" stroke-opacity="0.8" stroke-linejoin="round"/><text x="14.5" y="6.3" font-size="3.5" fill="#1f3440" text-anchor="middle">OH</text><text x="3.9" y="15.5" font-size="3.3" fill="#1f3440" text-anchor="middle">HO</text><text x="6.6" y="17.9" font-size="3.3" fill="#1f3440" text-anchor="middle">HO</text><text x="15.5" y="19.5" font-size="3.3" fill="#1f3440" text-anchor="middle">OH</text><text x="17.1" y="11" font-size="3.5" fill="#1f3440" text-anchor="middle">O</text><text x="21.3" y="21.8" font-size="3.5" fill="#1f3440" text-anchor="middle">OH</text><path d="M26 15.2 L31 13.3 L35 14.2 L37.2 12.3 L40 14.2 L38.4 17.5 L33 17.2 L29 17.5 Z M33 13.3 L32 8.5 M40 14.2 L43 14.2" fill="none" stroke="#2c5468" stroke-width="0.9" stroke-opacity="0.8" stroke-linejoin="round"/><text x="33.6" y="7.6" font-size="3.5" fill="#1f3440" text-anchor="middle">OH</text><text x="25.9" y="16.4" font-size="3.3" fill="#1f3440" text-anchor="middle">HO</text><text x="28.4" y="18.6" font-size="3.3" fill="#1f3440" text-anchor="middle">HO</text><text x="37.2" y="13" font-size="3.5" fill="#1f3440" text-anchor="middle">O</text><text x="43.8" y="15.4" font-size="3.3" fill="#1f3440" text-anchor="middle">OH</text><text x="38.2" y="19.8" font-size="3.3" fill="#1f3440" text-anchor="middle">OH</text><path d="M12.9 27 V44 M9.8 29.8 H16 M9.8 33.3 H16 M9.8 36.5 H16 M9.8 39.5 H16 M12.9 27 L10.5 25.5 M12.9 44 L15.5 45" fill="none" stroke="#2c5468" stroke-width="0.9" stroke-opacity="0.8" stroke-linejoin="round"/><text x="10" y="26.4" font-size="3" fill="#1f3440" text-anchor="middle">O</text><text x="9" y="30.6" font-size="3" fill="#1f3440" text-anchor="middle">H</text><text x="17.8" y="30.6" font-size="3" fill="#1f3440" text-anchor="middle">OH</text><text x="8.6" y="33.9" font-size="3" fill="#1f3440" text-anchor="middle">HO</text><text x="17.4" y="33.9" font-size="3" fill="#1f3440" text-anchor="middle">H</text><text x="9" y="37.2" font-size="3" fill="#1f3440" text-anchor="middle">H</text><text x="17.8" y="37.2" font-size="3" fill="#1f3440" text-anchor="middle">OH</text><text x="9" y="40.3" font-size="3" fill="#1f3440" text-anchor="middle">H</text><text x="17.8" y="40.3" font-size="3" fill="#1f3440" text-anchor="middle">OH</text><text x="15.8" y="45.2" font-size="3" fill="#1f3440" text-anchor="middle">OH</text><path d="M30.2 26 L33 28.8 L33.2 32.3 L38.2 32 L41.4 38.2 L38 39.5 L32.3 39.5 L30 41 M33.2 32.3 L32.3 39.5 M35 34.5 L34.5 37 M38 39.5 L38.5 44.6" fill="none" stroke="#2c5468" stroke-width="0.9" stroke-opacity="0.8" stroke-linejoin="round"/><text x="28.5" y="26.5" font-size="3.5" fill="#1f3440" text-anchor="middle">HO</text><text x="38.6" y="33" font-size="3.8" fill="#1f3440" text-anchor="middle">O</text><text x="35.2" y="35.6" font-size="3.2" fill="#1f3440" text-anchor="middle">OH</text><text x="28.7" y="41.6" font-size="3.3" fill="#1f3440" text-anchor="middle">HO</text><text x="41.5" y="41.2" font-size="3.3" fill="#1f3440" text-anchor="middle">OH</text><text x="38.5" y="45.8" font-size="3.6" fill="#1f3440" text-anchor="middle">O</text></g>
<path d="M673.9 415 L673.9 420.7 L668.1 420.7 Z" fill="#000"/>
<path d="M723.9 415 L723.9 420.7 L718.1 420.7 Z" fill="#000"/>
<path d="M673.9 465 L673.9 470.7 L668.1 470.7 Z" fill="#000"/>
<path d="M723.9 465 L723.9 470.7 L718.1 470.7 Z" fill="#000"/>
<path d="M673.9 515 L673.9 520.7 L668.1 520.7 Z" fill="#000"/>
<path d="M723.9 515 L723.9 520.7 L718.1 520.7 Z" fill="#000"/>
<path d="M673.9 565 L673.9 570.7 L668.1 570.7 Z" fill="#000"/>
<path d="M723.9 565 L723.9 570.7 L718.1 570.7 Z" fill="#000"/>
<path d="M673.9 615 L673.9 620.7 L668.1 620.7 Z" fill="#000"/>
<path d="M723.9 615 L723.9 620.7 L718.1 620.7 Z" fill="#000"/>
<path d="M673.9 665 L673.9 670.7 L668.1 670.7 Z" fill="#000"/>
<path d="M723.9 665 L723.9 670.7 L718.1 670.7 Z" fill="#000"/>
<path d="M673.9 715 L673.9 720.7 L668.1 720.7 Z" fill="#000"/>
<path d="M723.9 715 L723.9 720.7 L718.1 720.7 Z" fill="#000"/>
<rect x="706" y="728" width="24" height="24" fill="#ffffff"/>
<rect x="705" y="727" width="1" height="26" fill="#000"/>
<rect x="705" y="727" width="26" height="1" fill="#000"/>
<polygon points="718,731.8 725.3,735.8 725.3,743.7 718,747.6 710.7,743.7 710.7,735.8" fill="#fff" stroke="#2a2a2a" stroke-width="1.3"/>
<rect x="741" y="762" width="1" height="2" fill="#000"/>
<rect x="48" y="646" width="406" height="106" fill="#ffffff"/>
<rect x="47" y="645" width="1" height="108" fill="#000"/>
<rect x="47" y="645" width="408" height="1" fill="#000"/>
<rect x="454" y="645" width="1" height="108" fill="#000"/>
<rect x="52.5" y="650.5" width="47" height="47" rx="5.4" fill="url(#gg)" stroke="#000" stroke-width="2"/>
<rect x="102.5" y="650.5" width="47" height="47" rx="5.4" fill="url(#bg)" stroke="#121212" stroke-width="1.25"/>
<rect x="152.5" y="650.5" width="47" height="47" rx="5.4" fill="url(#bg)" stroke="#121212" stroke-width="1.25"/>
<rect x="202.5" y="650.5" width="47" height="47" rx="5.4" fill="url(#bg)" stroke="#121212" stroke-width="1.25"/>
<rect x="252.5" y="650.5" width="47" height="47" rx="5.4" fill="url(#bg)" stroke="#121212" stroke-width="1.25"/>
<rect x="302.5" y="650.5" width="47" height="47" rx="5.4" fill="url(#bg)" stroke="#121212" stroke-width="1.25"/>
<rect x="352.5" y="650.5" width="47" height="47" rx="5.4" fill="url(#bg)" stroke="#121212" stroke-width="1.25"/>
<rect x="402.5" y="650.5" width="47" height="47" rx="5.4" fill="url(#bg)" stroke="#121212" stroke-width="1.25"/>
<rect x="52.5" y="700.5" width="47" height="47" rx="5.4" fill="url(#bg)" stroke="#121212" stroke-width="1.25"/>
<rect x="102.5" y="700.5" width="47" height="47" rx="5.4" fill="url(#bg)" stroke="#121212" stroke-width="1.25"/>
<rect x="152.5" y="700.5" width="47" height="47" rx="5.4" fill="url(#bg)" stroke="#121212" stroke-width="1.25"/>
<rect x="202.5" y="700.5" width="47" height="47" rx="5.4" fill="url(#bg)" stroke="#121212" stroke-width="1.25"/>
<path d="M257.9 700.5 H294.1 A5.4 5.4 0 0 1 299.5 705.9 V747.5 H257.9 A5.4 5.4 0 0 1 252.5 742.1 V705.9 A5.4 5.4 0 0 1 257.9 700.5 Z" fill="url(#bg)" stroke="#121212" stroke-width="1.25" stroke-linejoin="miter"/>
<path d="M307.9 700.5 H344.1 A5.4 5.4 0 0 1 349.5 705.9 V747.5 H307.9 A5.4 5.4 0 0 1 302.5 742.1 V705.9 A5.4 5.4 0 0 1 307.9 700.5 Z" fill="url(#bg)" stroke="#121212" stroke-width="1.25" stroke-linejoin="miter"/>
<path d="M357.9 700.5 H394.1 A5.4 5.4 0 0 1 399.5 705.9 V747.5 H357.9 A5.4 5.4 0 0 1 352.5 742.1 V705.9 A5.4 5.4 0 0 1 357.9 700.5 Z" fill="url(#bg)" stroke="#121212" stroke-width="1.25" stroke-linejoin="miter"/>
<path d="M407.9 700.5 H444.1 A5.4 5.4 0 0 1 449.5 705.9 V747.5 H407.9 A5.4 5.4 0 0 1 402.5 742.1 V705.9 A5.4 5.4 0 0 1 407.9 700.5 Z" fill="url(#bg)" stroke="#121212" stroke-width="1.25" stroke-linejoin="miter"/>
<defs><linearGradient id="dg1" x1="0" y1="0" x2="1" y2="1"><stop offset="0" stop-color="#58a35a"/><stop offset="1" stop-color="#356f3b"/></linearGradient><linearGradient id="dg2" x1="0" y1="0" x2="1" y2="1"><stop offset="0" stop-color="#62a6c0"/><stop offset="1" stop-color="#3a7496"/></linearGradient></defs>
<g transform="translate(52,650)"><circle cx="23.9" cy="23.9" r="19.9" fill="none" stroke="#1f4d24" stroke-width="0.8"/><circle cx="23.9" cy="23.9" r="18.5" fill="url(#dg1)" stroke="#1f4d24" stroke-width="0.8"/><path d="M11.46 21.93 A12.6 12.6 0 1 0 29.02 12.39" fill="none" stroke="#000" stroke-width="8.4" stroke-linecap="round"/><path d="M16.2 10.5 L29.6 3.0 L29.9 17.6 Z" fill="#fff" stroke="#000" stroke-width="1.4" stroke-linejoin="miter"/><path d="M11.46 21.93 A12.6 12.6 0 1 0 29.02 12.39" fill="none" stroke="#fff" stroke-width="5.9" stroke-linecap="round"/><path d="M17.8 10.6 L28.9 4.4 L29.1 16.4 Z" fill="#fff"/></g>
<g transform="translate(102,650)"><g transform="translate(47.8,0) scale(-1,1)"><circle cx="23.9" cy="23.9" r="19.9" fill="none" stroke="#1e4a5e" stroke-width="0.8"/><circle cx="23.9" cy="23.9" r="18.5" fill="url(#dg2)" stroke="#1e4a5e" stroke-width="0.8"/><path d="M11.46 21.93 A12.6 12.6 0 1 0 29.02 12.39" fill="none" stroke="#000" stroke-width="8.4" stroke-linecap="round"/><path d="M16.2 10.5 L29.6 3.0 L29.9 17.6 Z" fill="#fff" stroke="#000" stroke-width="1.4" stroke-linejoin="miter"/><path d="M11.46 21.93 A12.6 12.6 0 1 0 29.02 12.39" fill="none" stroke="#fff" stroke-width="5.9" stroke-linecap="round"/><path d="M17.8 10.6 L28.9 4.4 L29.1 16.4 Z" fill="#fff"/></g></g>
<g transform="translate(152,650)"><g transform="rotate(0 23.9 23.9)"><line x1="23.9" y1="8" x2="23.9" y2="13" stroke="#555" stroke-width="2"/></g><polygon points="23.90,3.00 19.10,8.20 28.70,8.20" fill="#fff" stroke="#555" stroke-width="0.9" stroke-linejoin="round"/><g transform="rotate(90 23.9 23.9)"><line x1="23.9" y1="8" x2="23.9" y2="13" stroke="#555" stroke-width="2"/></g><polygon points="44.80,23.90 39.60,19.10 39.60,28.70" fill="#fff" stroke="#555" stroke-width="0.9" stroke-linejoin="round"/><g transform="rotate(180 23.9 23.9)"><line x1="23.9" y1="8" x2="23.9" y2="13" stroke="#555" stroke-width="2"/></g><polygon points="23.90,44.80 28.70,39.60 19.10,39.60" fill="#fff" stroke="#555" stroke-width="0.9" stroke-linejoin="round"/><g transform="rotate(270 23.9 23.9)"><line x1="23.9" y1="8" x2="23.9" y2="13" stroke="#555" stroke-width="2"/></g><polygon points="3.00,23.90 8.20,28.70 8.20,19.10" fill="#fff" stroke="#555" stroke-width="0.9" stroke-linejoin="round"/><g transform="rotate(0 23.9 23.9)"><line x1="31.5" y1="16.3" x2="35.5" y2="12.3" stroke="#555" stroke-width="2.2"/><line x1="31.5" y1="16.3" x2="35.5" y2="12.3" stroke="#fff" stroke-width="0.8"/></g><polygon points="38.90,8.60 31.60,8.80 38.70,15.90" fill="#fff" stroke="#555" stroke-width="0.9" stroke-linejoin="round"/><g transform="rotate(90 23.9 23.9)"><line x1="31.5" y1="16.3" x2="35.5" y2="12.3" stroke="#555" stroke-width="2.2"/><line x1="31.5" y1="16.3" x2="35.5" y2="12.3" stroke="#fff" stroke-width="0.8"/></g><polygon points="39.20,38.90 39.00,31.60 31.90,38.70" fill="#fff" stroke="#555" stroke-width="0.9" stroke-linejoin="round"/><g transform="rotate(180 23.9 23.9)"><line x1="31.5" y1="16.3" x2="35.5" y2="12.3" stroke="#555" stroke-width="2.2"/><line x1="31.5" y1="16.3" x2="35.5" y2="12.3" stroke="#fff" stroke-width="0.8"/></g><polygon points="8.90,39.20 16.20,39.00 9.10,31.90" fill="#fff" stroke="#555" stroke-width="0.9" stroke-linejoin="round"/><g transform="rotate(270 23.9 23.9)"><line x1="31.5" y1="16.3" x2="35.5" y2="12.3" stroke="#555" stroke-width="2.2"/><line x1="31.5" y1="16.3" x2="35.5" y2="12.3" stroke="#fff" stroke-width="0.8"/></g><polygon points="8.60,8.90 8.80,16.20 15.90,9.10" fill="#fff" stroke="#555" stroke-width="0.9" stroke-linejoin="round"/><circle cx="23.9" cy="23.9" r="9.6" fill="none" stroke="#555" stroke-width="3.6"/><circle cx="23.9" cy="23.9" r="9.6" fill="none" stroke="#fff" stroke-width="2.3"/></g>
<g transform="translate(202,650)"><circle cx="23.9" cy="23.9" r="18.9" fill="none" stroke="#555" stroke-width="3.6"/><circle cx="23.9" cy="23.9" r="18.9" fill="none" stroke="#fff" stroke-width="2.3"/><g transform="rotate(0 23.9 23.9)"><line x1="23.9" y1="6.4" x2="23.9" y2="10.8" stroke="#555" stroke-width="2"/></g><polygon points="23.90,15.60 19.10,10.50 28.70,10.50" fill="#fff" stroke="#555" stroke-width="0.9" stroke-linejoin="round"/><g transform="rotate(90 23.9 23.9)"><line x1="23.9" y1="6.4" x2="23.9" y2="10.8" stroke="#555" stroke-width="2"/></g><polygon points="32.20,23.90 37.30,19.10 37.30,28.70" fill="#fff" stroke="#555" stroke-width="0.9" stroke-linejoin="round"/><g transform="rotate(180 23.9 23.9)"><line x1="23.9" y1="6.4" x2="23.9" y2="10.8" stroke="#555" stroke-width="2"/></g><polygon points="23.90,32.20 28.70,37.30 19.10,37.30" fill="#fff" stroke="#555" stroke-width="0.9" stroke-linejoin="round"/><g transform="rotate(270 23.9 23.9)"><line x1="23.9" y1="6.4" x2="23.9" y2="10.8" stroke="#555" stroke-width="2"/></g><polygon points="15.60,23.90 10.50,28.70 10.50,19.10" fill="#fff" stroke="#555" stroke-width="0.9" stroke-linejoin="round"/></g>
<g transform="translate(252,650)"><defs><linearGradient id="zg" x1="0" y1="0" x2="1" y2="1"><stop offset="0" stop-color="#cadee6"/><stop offset="1" stop-color="#92b4d0"/></linearGradient></defs><circle cx="23.9" cy="23.9" r="19.7" fill="none" stroke="#0d1a20" stroke-width="1.5"/><circle cx="23.9" cy="23.9" r="17.9" fill="url(#zg)" stroke="#0d1a20" stroke-width="1.2"/><text x="24.6" y="27.8" font-size="10.8" fill="#1a1a1a" text-anchor="middle">100%</text></g>
<g transform="translate(302,650)"><line x1="8.7" y1="12.1" x2="17.1" y2="23.7" stroke="#333" stroke-width="0.8"/><line x1="9" y1="35.1" x2="17.1" y2="23.7" stroke="#333" stroke-width="0.8"/><line x1="22" y1="23.8" x2="32.8" y2="23.8" stroke="#000" stroke-width="2.6"/><line x1="32.8" y1="23.7" x2="41" y2="12.5" stroke="#333" stroke-width="0.8"/><line x1="32.8" y1="23.7" x2="41" y2="35.1" stroke="#333" stroke-width="0.8"/><circle cx="8.7" cy="12.1" r="5.6" fill="#fff" stroke="#222" stroke-width="0.9"/><circle cx="8.7" cy="12.1" r="2.1" fill="#444" stroke="#111" stroke-width="0.5"/><circle cx="17.1" cy="23.7" r="5.6" fill="#fff" stroke="#222" stroke-width="0.9"/><circle cx="17.1" cy="23.7" r="2.1" fill="#444" stroke="#111" stroke-width="0.5"/><circle cx="9" cy="35.1" r="5.6" fill="#fff" stroke="#222" stroke-width="0.9"/><circle cx="9" cy="35.1" r="2.1" fill="#444" stroke="#111" stroke-width="0.5"/><rect x="31.499999999999996" y="22.4" width="2.6" height="2.6" rx="0.7" fill="#555" stroke="#222" stroke-width="0.5"/><rect x="39.7" y="11.2" width="2.6" height="2.6" rx="0.7" fill="#555" stroke="#222" stroke-width="0.5"/><rect x="39.7" y="33.800000000000004" width="2.6" height="2.6" rx="0.7" fill="#555" stroke="#222" stroke-width="0.5"/></g>
<g transform="translate(352,650)"><circle cx="24.6" cy="9.6" r="5.7" fill="#fff" stroke="#222" stroke-width="0.9"/><circle cx="24.6" cy="9.6" r="2.1" fill="#444" stroke="#111" stroke-width="0.5"/><circle cx="37.1" cy="17.9" r="5.7" fill="#fff" stroke="#222" stroke-width="0.9"/><circle cx="37.1" cy="17.9" r="2.1" fill="#444" stroke="#111" stroke-width="0.5"/><circle cx="37.1" cy="30.7" r="5.7" fill="#fff" stroke="#222" stroke-width="0.9"/><circle cx="37.1" cy="30.7" r="2.1" fill="#444" stroke="#111" stroke-width="0.5"/><circle cx="24.6" cy="38.4" r="5.7" fill="#fff" stroke="#222" stroke-width="0.9"/><circle cx="24.6" cy="38.4" r="2.1" fill="#444" stroke="#111" stroke-width="0.5"/><circle cx="12.2" cy="30.7" r="5.7" fill="#fff" stroke="#222" stroke-width="0.9"/><circle cx="12.2" cy="30.7" r="2.1" fill="#444" stroke="#111" stroke-width="0.5"/><circle cx="12.2" cy="17.9" r="5.7" fill="#fff" stroke="#222" stroke-width="0.9"/><circle cx="12.2" cy="17.9" r="2.1" fill="#444" stroke="#111" stroke-width="0.5"/></g>
<g transform="translate(402,650)"><polygon points="24.7,9.5 37.3,17.9 37.3,31 24.7,38.4 12.6,31 12.6,17.9" fill="none" stroke="#333" stroke-width="0.8"/><circle cx="24.7" cy="9.5" r="2.3" fill="#666" stroke="#222" stroke-width="0.7"/><circle cx="37.3" cy="17.9" r="2.3" fill="#666" stroke="#222" stroke-width="0.7"/><circle cx="37.3" cy="31" r="2.3" fill="#666" stroke="#222" stroke-width="0.7"/><circle cx="24.7" cy="38.4" r="2.3" fill="#666" stroke="#222" stroke-width="0.7"/><circle cx="12.6" cy="31" r="2.3" fill="#666" stroke="#222" stroke-width="0.7"/><circle cx="12.6" cy="17.9" r="2.3" fill="#666" stroke="#222" stroke-width="0.7"/></g>
<g transform="translate(52,700)"><circle cx="23.9" cy="23.9" r="15.15" fill="none" stroke="#000" stroke-width="6.6"/><line x1="34.6" y1="13.2" x2="13.2" y2="34.6" stroke="#000" stroke-width="6.4"/><circle cx="23.9" cy="23.9" r="15.15" fill="none" stroke="#fff" stroke-width="4.5"/><line x1="35.4" y1="12.4" x2="12.4" y2="35.4" stroke="#fff" stroke-width="4.3"/></g>
<g transform="translate(102,700)"><ellipse cx="36.7" cy="29" rx="3.6" ry="3.3" fill="none" stroke="#333" stroke-width="2.6"/><ellipse cx="36.7" cy="29" rx="3.6" ry="3.3" fill="none" stroke="#fff" stroke-width="1.4"/><ellipse cx="25" cy="38.8" rx="4.4" ry="5.8" fill="none" stroke="#333" stroke-width="2.6"/><ellipse cx="25" cy="38.8" rx="4.4" ry="5.8" fill="none" stroke="#fff" stroke-width="1.4"/><g fill="#fff" stroke="#333" stroke-width="0.75" stroke-linejoin="round"><path d="M6.1 13.4 L25.3 22.1 L33.9 25.6 L33.1 27.9 L23.3 25.9 L5.3 15 Q4.6 13.9 6.1 13.4 Z"/><path d="M22.6 3.4 Q23.9 1.4 25.2 3.4 L26.4 23.3 L25.8 32.9 L23.4 32.9 L22.2 23.3 Z"/></g></g>
<g transform="translate(152,700)"><g stroke="#222" stroke-width="0.8" stroke-linejoin="miter"><path d="M6.4 14.2 H27.3 V18.5 H21.2 V22 L27 36 H22 L18.4 27 L13.6 36 H8.4 L15.5 22 V18.5 H6.4 Z" fill="#c6e2eb"/><circle cx="18.2" cy="9.8" r="4.6" fill="#c6e2eb"/><path d="M20.6 19.6 H43.8 V23.6 H35.6 V27 L41.8 41.5 H36.4 L32 32 L27.8 41.5 H22.4 L28.6 27 V23.6 H20.6 Z" fill="#fff"/><circle cx="31.7" cy="15.2" r="4.4" fill="#fff"/></g></g>
<g transform="translate(202,700)"><path d="M27.3 2 Q39.5 8.5 45.8 21.9 L20.6 38.8 L9.1 27.3 Z" fill="#fff" stroke="#222" stroke-width="0.9" stroke-linejoin="round"/><path d="M9.1 27.3 Q8.5 33.5 13.5 36.8 Q17.5 39.8 20.6 38.8 Z" fill="#c4c4c4" stroke="#222" stroke-width="0.8"/><line x1="14.6" y1="33.6" x2="10.8" y2="37.6" stroke="#333" stroke-width="2.8" stroke-linecap="round"/><line x1="14.6" y1="33.6" x2="10.8" y2="37.6" stroke="#fff" stroke-width="1.4"/><path d="M2.7 45.6 L6.4 40.6 L10.5 38.4 L12 42.5 L13.8 45.6 Z" fill="#6a6a6a"/><polygon points="28,9.4 37.1,13.5 37.7,21.6 31.3,27.3 22.6,24.6 20.9,15.8" fill="#fff" stroke="#333" stroke-width="0.8"/><circle cx="28" cy="9.4" r="1.1" fill="#444"/><circle cx="37.1" cy="13.5" r="1.1" fill="#444"/><circle cx="37.7" cy="21.6" r="1.1" fill="#444"/><circle cx="31.3" cy="27.3" r="1.1" fill="#444"/><circle cx="22.6" cy="24.6" r="1.1" fill="#444"/><circle cx="20.9" cy="15.8" r="1.1" fill="#444"/></g>
<g transform="translate(252,700)"><g fill="none" stroke="#8c847f" stroke-width="1.1"><ellipse cx="23.9" cy="23.9" rx="21" ry="12" transform="rotate(27 23.9 23.9)"/><ellipse cx="23.9" cy="23.9" rx="21" ry="12" transform="rotate(-27 23.9 23.9)"/></g><circle cx="18.099999999999998" cy="22.9" r="4.6" fill="#fff" stroke="#333" stroke-width="0.3"/><circle cx="24.0" cy="17.2" r="5.1" fill="#000"/><circle cx="28.0" cy="26.0" r="4.8" fill="#fff" stroke="#333" stroke-width="0.3"/><circle cx="21.2" cy="29.299999999999997" r="5.2" fill="#000"/><circle cx="39.2" cy="10.5" r="1.7" fill="#000"/><circle cx="35" cy="32.5" r="1.7" fill="#000"/></g>
<g transform="translate(302,700)"><g fill="none" stroke="#8c847f" stroke-width="1"><ellipse cx="23.9" cy="23.8" rx="18.9" ry="13"/><ellipse cx="12" cy="23.9" rx="9.6" ry="14"/><ellipse cx="35.9" cy="23.9" rx="9.6" ry="14"/></g><circle cx="8.8" cy="23.8" r="2.6" fill="#fff"/><circle cx="13.100000000000001" cy="20.200000000000003" r="2.6" fill="#000"/><circle cx="16.0" cy="24.8" r="2.6" fill="#fff"/><circle cx="11.8" cy="26.8" r="2.9" fill="#000"/><circle cx="38.2" cy="23.8" r="2.6" fill="#fff"/><circle cx="33.900000000000006" cy="20.200000000000003" r="2.6" fill="#000"/><circle cx="31.000000000000004" cy="24.8" r="2.6" fill="#fff"/><circle cx="35.2" cy="26.8" r="2.9" fill="#000"/><circle cx="4.7" cy="15.5" r="1.7" fill="#000"/><circle cx="27" cy="11.1" r="1.7" fill="#000"/><circle cx="13.2" cy="34.7" r="1.7" fill="#000"/><circle cx="39.4" cy="37.4" r="1.7" fill="#000"/></g>
<g transform="translate(352,700)"><rect x="5.5" y="5.1" width="37.3" height="37.3" fill="none" stroke="#000" stroke-width="1.3" stroke-dasharray="1.6 1.6"/><path d="M13.2 9.1 L36.1 19 L28.6 22.6 L35.4 34.7 L28 38.8 L20.6 28 L13.2 32 Z" fill="#fff" stroke="#111" stroke-width="1.1" stroke-linejoin="miter"/></g>
<g transform="translate(402,700)"><path d="M23.8 3 L32.6 12 H28.5 V19.6 H36 V15.4 L44.7 24 L36 32.6 V28.4 H28.5 V36 H32.6 L23.8 44.8 L15 36 H19.2 V28.4 H11.6 V32.6 L2.9 24 L11.6 15.4 V19.6 H19.2 V12 H15 Z" fill="#fff" stroke="#111" stroke-width="1.3" stroke-linejoin="miter"/></g>
<path d="M297.9 740 L297.9 745.7 L292.1 745.7 Z" fill="#000"/>
<path d="M347.9 740 L347.9 745.7 L342.1 745.7 Z" fill="#000"/>
<path d="M397.9 740 L397.9 745.7 L392.1 745.7 Z" fill="#000"/>
<path d="M447.9 740 L447.9 745.7 L442.1 745.7 Z" fill="#000"/>
<rect x="22" y="728" width="25" height="24" fill="#ffffff"/>
<rect x="22" y="727" width="26" height="1" fill="#000"/>
<rect x="47" y="727" width="1" height="26" fill="#000"/>
<g stroke="#222" stroke-width="1.2"><line x1="35" y1="731" x2="35" y2="749" stroke="#888" stroke-width="1.6"/><line x1="27" y1="735.5" x2="43" y2="744.5"/><line x1="27" y1="744.5" x2="43" y2="735.5"/></g>
<polygon points="376.5,382.0 408.8,400.5 408.8,437.8 376.5,456.1 344.2,437.8 344.2,400.5" fill="none" stroke="#000" stroke-width="2" stroke-linejoin="miter"/>
<line x1="376.5" y1="382" x2="376.5" y2="343.3" stroke="#000" stroke-width="2.0" stroke-linecap="butt"/>
<line x1="377.9" y1="388.6" x2="402.8" y2="402.8" stroke="#000" stroke-width="2.0" stroke-linecap="butt"/>
<line x1="349.0" y1="405.2" x2="349.0" y2="433.2" stroke="#000" stroke-width="2.0" stroke-linecap="butt"/>
<line x1="378.0" y1="449.8" x2="402.6" y2="436.1" stroke="#000" stroke-width="2.0" stroke-linecap="butt"/>
<line x1="344.2" y1="400.5" x2="320.2" y2="387.0" stroke="#000" stroke-width="2.0" stroke-linecap="butt"/>
<line x1="287.8" y1="395.2" x2="302.7" y2="386.8" stroke="#000" stroke-width="2.0" stroke-linecap="butt"/>
<line x1="309.2" y1="356.5" x2="309.2" y2="371.6" stroke="#000" stroke-width="2.0" stroke-linecap="butt"/>
<line x1="314.0" y1="356.5" x2="314.0" y2="371.6" stroke="#000" stroke-width="2.0" stroke-linecap="butt"/>
<line x1="408.8" y1="400.5" x2="432.8" y2="387.0" stroke="#000" stroke-width="2.0" stroke-linecap="butt"/>
<line x1="465.2" y1="395.2" x2="450.3" y2="386.8" stroke="#000" stroke-width="2.0" stroke-linecap="butt"/>
<line x1="439.0" y1="356.5" x2="439.0" y2="371.6" stroke="#000" stroke-width="2.0" stroke-linecap="butt"/>
<line x1="443.8" y1="356.5" x2="443.8" y2="371.6" stroke="#000" stroke-width="2.0" stroke-linecap="butt"/>
<line x1="376.5" y1="456.1" x2="376.5" y2="484.5" stroke="#000" stroke-width="2.0" stroke-linecap="butt"/>
<line x1="384.0" y1="499.0" x2="399.3" y2="507.6" stroke="#000" stroke-width="2.0" stroke-linecap="butt"/>
<line x1="368.9" y1="499.0" x2="353.6" y2="507.6" stroke="#000" stroke-width="2.0" stroke-linecap="butt"/>
<line x1="371.3" y1="503.2" x2="356.0" y2="511.8" stroke="#000" stroke-width="2.0" stroke-linecap="butt"/>
<text x="311.5" y="390.8" font-size="25" fill="#0000ff" text-anchor="middle">N</text>
<text x="441.5" y="390.8" font-size="25" fill="#0000ff" text-anchor="middle">N</text>
<text x="376.4" y="503.6" font-size="25" fill="#0000ff" text-anchor="middle">N</text>
<text x="311.6" y="353.8" font-size="25" fill="#de1c1c" text-anchor="middle">O</text>
<text x="279.1" y="409.8" font-size="25" fill="#de1c1c" text-anchor="middle">O</text>
<text x="441.5" y="353.8" font-size="25" fill="#de1c1c" text-anchor="middle">O</text>
<text x="473.8" y="409.6" font-size="25" fill="#de1c1c" text-anchor="middle">O</text>
<text x="344.2" y="522.9" font-size="25" fill="#de1c1c" text-anchor="middle">O</text>
<text x="408.4" y="522.9" font-size="25" fill="#de1c1c" text-anchor="middle">O</text>
<path d="M324.5 371.6 H333.29999999999995 M328.9 367.1 V376.1" stroke="#0000ff" stroke-width="2"/>
<path d="M454.20000000000005 371.4 H463.0 M458.6 366.9 V375.9" stroke="#0000ff" stroke-width="2"/>
<path d="M389.8 483.7 H398.59999999999997 M394.2 479.2 V488.2" stroke="#0000ff" stroke-width="2"/>
<line x1="285" y1="382.5" x2="293.9" y2="382.5" stroke="#de1c1c" stroke-width="2"/>
<line x1="487.6" y1="390" x2="496" y2="390" stroke="#de1c1c" stroke-width="2"/>
<line x1="423.1" y1="502.6" x2="431" y2="502.6" stroke="#de1c1c" stroke-width="2"/>
<polyline points="331.7,765.1 350.7,754.1 369.7,765.1" fill="none" stroke="#000" stroke-width="1.7"/>
<line x1="352.3" y1="759.3" x2="364.7" y2="766.5" stroke="#000" stroke-width="1.7"/>
<polyline points="382.7,765.1 401.7,754.1 420.7,765.1" fill="none" stroke="#000" stroke-width="1.7"/>
<line x1="403.3" y1="759.3" x2="415.7" y2="766.5" stroke="#000" stroke-width="1.7"/>
<text x="733" y="435.6" font-size="14.2" fill="#000" text-anchor="start" >Te</text></svg></body></html>
